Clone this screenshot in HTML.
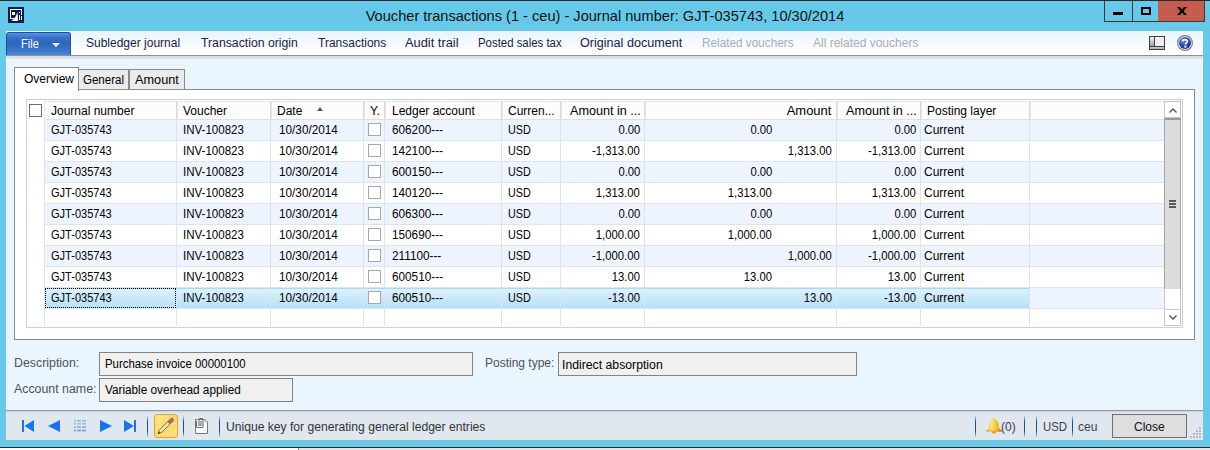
<!DOCTYPE html>
<html><head><meta charset="utf-8">
<style>
*{margin:0;padding:0;box-sizing:border-box}
html,body{width:1210px;height:450px;overflow:hidden;background:#fff;font-family:"Liberation Sans",sans-serif;font-size:12px;color:#000}
.a{position:absolute}
.t{position:absolute;white-space:nowrap;line-height:14px}
.n{font-size:11px}
.sl{transform-origin:0 0}
.sr{transform-origin:100% 0;transform:scaleX(0.94)}
svg{position:absolute;overflow:visible}
#frame{left:0;top:0;width:1210px;height:448px;background:#66c9e9;border-top:1px solid #2b2b2b;border-bottom:1px solid #2b2b2b}
#title{left:0;top:8px;width:1210px;text-align:center;font-size:14.6px;color:#111;line-height:17px;padding-left:0px}
.wb{position:absolute;top:1px;height:21px;border:1px solid #3a3a3a;border-top:none;background:#66c9e9}
#menubar{left:6px;top:31px;width:1197px;height:25px;background:linear-gradient(#eaf4fd,#ffffff);border-bottom:1px solid #8c9196}
.mi{top:36px;color:#1b1b48}
.dis{color:#a9adb3}
#content{left:6px;top:56px;width:1197px;height:354px;background:#ebf5fe}
.tab{position:absolute;background:#ebebeb;border:1px solid #8a8a8a;border-bottom:none}
.hc{position:absolute;top:101px;height:19px;background:#fcfcfc;border:1px solid #e6e6e6;border-bottom-color:#e0e0e0}
.vl{position:absolute;width:1px;background:#d9e5f5}
.cb{position:absolute;width:13px;height:13px;border:1px solid #a8a8a8;background:#fff}
.lab{color:#4f5060}
.fld{position:absolute;background:#f0f0f0;border:1px solid #828282}
.sep{position:absolute;top:415px;width:1px;height:23px;background:linear-gradient(rgba(31,79,134,0),#1f4f86 30%,#1f4f86 70%,rgba(31,79,134,0))}
.st{color:#3b3b55}
</style></head><body>
<div id="frame" class="a"></div>
<svg style="left:8px;top:7px" width="16" height="16" viewBox="0 0 16 16">
<rect width="16" height="16" fill="#0b1b4b"/>
<path d="M2 2h12v1H3v8h3v1H2z" fill="#fff"/>
<rect x="4" y="5" width="3" height="3" fill="#fff"/>
<path d="M3 14 C7 12 8 9 9.5 5 L10 14z" fill="#fff"/>
<rect x="11" y="5" width="1" height="1" fill="#fff"/>
<rect x="11" y="8" width="1" height="5" fill="#fff"/>
<rect x="13" y="3" width="1" height="5" fill="#fff"/>
<rect x="13" y="9" width="1" height="4" fill="#fff"/>
</svg>
<div id="title" class="t">Voucher transactions (1 - ceu) - Journal number: GJT-035743, 10/30/2014</div>
<div class="wb" style="left:1104px;width:29px"></div>
<div class="wb" style="left:1133px;width:26px;border-left:none;border-right:none"></div>
<div class="wb" style="left:1158px;width:47px;background:#c65b50;border-left:none"></div>
<div class="a" style="left:1113px;top:12px;width:10px;height:3px;background:#000"></div>
<div class="a" style="left:1141px;top:7px;width:10px;height:8px;border:2px solid #000;border-top-width:2px"></div>
<svg style="left:1177px;top:7px" width="10" height="8" viewBox="0 0 10 8"><path d="M0 0h3l2 2.5l2-2.5h3l-3.4 4l3.4 4h-3l-2-2.5l-2 2.5h-3l3.4-4z" fill="#000"/></svg>
<div id="content" class="a"></div>
<div class="a" style="left:6px;top:56px;width:1197px;height:3px;background:linear-gradient(#d9dbde,#e3e6ea)"></div>
<div id="menubar" class="a"></div>
<div class="a" style="left:6px;top:32px;width:65px;height:23px;background:linear-gradient(#5a92dc 0%,#3a73c9 20%,#2d64bb 45%,#3a78cc 80%,#4a88d6 100%);border:1px solid #1f4fa5;border-bottom:none;border-radius:3px 3px 0 0"></div>
<div class="t mi sl" style="left:21px;top:37px;color:#fff;transform:scaleX(0.92)">File</div>
<div class="a" style="left:52px;top:43px;width:0;height:0;border-left:4px solid transparent;border-right:4px solid transparent;border-top:4px solid #fff"></div>
<div class="t mi sl" style="left:86px;transform:scaleX(1)">Subledger journal</div>
<div class="t mi sl" style="left:201px;transform:scaleX(1.02)">Transaction origin</div>
<div class="t mi sl" style="left:318px;transform:scaleX(1)">Transactions</div>
<div class="t mi sl" style="left:405px;transform:scaleX(1.07)">Audit trail</div>
<div class="t mi sl" style="left:478px;transform:scaleX(0.95)">Posted sales tax</div>
<div class="t mi sl" style="left:580px;transform:scaleX(1.05)">Original document</div>
<div class="t mi sl dis" style="left:702px;transform:scaleX(0.98)">Related vouchers</div>
<div class="t mi sl dis" style="left:813px;transform:scaleX(1)">All related vouchers</div>
<svg style="left:1149px;top:36px" width="17" height="14" viewBox="0 0 17 14">
<defs><linearGradient id="lg1" x1="0" y1="0" x2="0" y2="1"><stop offset="0" stop-color="#f4f4f4"/><stop offset="1" stop-color="#9da3a9"/></linearGradient>
<linearGradient id="lg2" x1="0" y1="0" x2="0" y2="1"><stop offset="0" stop-color="#c8ccd0"/><stop offset="1" stop-color="#a9aeb3"/></linearGradient></defs>
<rect x="0.5" y="0.5" width="15" height="13" fill="#f0f0f0" stroke="#3b4148"/>
<rect x="1" y="1" width="4" height="9" fill="url(#lg1)"/>
<rect x="5" y="1" width="1" height="9" fill="#3b4148"/>
<rect x="1" y="10" width="14" height="1" fill="#3b4148"/>
<rect x="1" y="11" width="14" height="2" fill="url(#lg2)"/>
</svg>
<svg style="left:1177px;top:35px" width="16" height="16" viewBox="0 0 16 16">
<defs><radialGradient id="hg" cx="0.35" cy="0.3" r="0.8"><stop offset="0" stop-color="#6b9cf0"/><stop offset="0.5" stop-color="#2447b5"/><stop offset="1" stop-color="#1a3aa0"/></radialGradient></defs>
<circle cx="8" cy="8" r="7.4" fill="#f4f4f4" stroke="#808080" stroke-width="1.2"/>
<circle cx="8" cy="8" r="6" fill="url(#hg)"/>
<path d="M5.6 6.2 C5.6 4.3 10.4 4.1 10.4 6.3 C10.4 7.9 8.4 7.8 8.4 9.6" fill="none" stroke="#fff" stroke-width="1.8"/>
<rect x="7.4" y="10.6" width="2" height="2" fill="#fff"/>
</svg>
<div class="a" style="left:14px;top:89px;width:1181px;height:251px;background:#fff;border:1px solid #8a8a8a"></div>
<div class="tab" style="left:78px;top:69px;width:51px;height:20px"></div>
<div class="tab" style="left:129px;top:69px;width:56px;height:20px"></div>
<div class="tab" style="left:14px;top:67px;width:65px;height:24px;background:#fff"></div>
<div class="t" style="left:24px;top:72px">Overview</div>
<div class="t sl" style="left:83px;top:73px;transform:scaleX(0.96)">General</div>
<div class="t sl" style="left:135px;top:73px;transform:scaleX(1.06)">Amount</div>
<div class="a" style="left:26px;top:99px;width:1157px;height:229px;border:1px solid #c3d3e6;background:#fff"></div>
<div class="a" style="left:45px;top:120px;width:1119px;height:21px;background:#eef4fe;border-bottom:1px solid #d9e5f5"></div>
<div class="a" style="left:45px;top:141px;width:1119px;height:21px;background:#ffffff;border-bottom:1px solid #d9e5f5"></div>
<div class="a" style="left:45px;top:162px;width:1119px;height:21px;background:#eef4fe;border-bottom:1px solid #d9e5f5"></div>
<div class="a" style="left:45px;top:183px;width:1119px;height:21px;background:#ffffff;border-bottom:1px solid #d9e5f5"></div>
<div class="a" style="left:45px;top:204px;width:1119px;height:21px;background:#eef4fe;border-bottom:1px solid #d9e5f5"></div>
<div class="a" style="left:45px;top:225px;width:1119px;height:21px;background:#ffffff;border-bottom:1px solid #d9e5f5"></div>
<div class="a" style="left:45px;top:246px;width:1119px;height:21px;background:#eef4fe;border-bottom:1px solid #d9e5f5"></div>
<div class="a" style="left:45px;top:267px;width:1119px;height:21px;background:#ffffff;border-bottom:1px solid #d9e5f5"></div>
<div class="a" style="left:45px;top:288px;width:1119px;height:21px;background:#eef4fe;border-bottom:1px solid #d9e5f5"></div>
<div class="a" style="left:45px;top:288px;width:985px;height:20px;background:linear-gradient(#def1fc,#b6e0f7);border-top:1px solid #a6daf7;border-right:1px solid #9ad4f5"></div>
<div class="vl" style="left:44px;top:120px;height:206px"></div>
<div class="vl" style="left:176px;top:120px;height:206px"></div>
<div class="vl" style="left:270px;top:120px;height:206px"></div>
<div class="vl" style="left:363px;top:120px;height:206px"></div>
<div class="vl" style="left:384px;top:120px;height:206px"></div>
<div class="vl" style="left:501px;top:120px;height:206px"></div>
<div class="vl" style="left:560px;top:120px;height:206px"></div>
<div class="vl" style="left:644px;top:120px;height:206px"></div>
<div class="vl" style="left:836px;top:120px;height:206px"></div>
<div class="vl" style="left:920px;top:120px;height:206px"></div>
<div class="vl" style="left:1029px;top:120px;height:206px"></div>
<div class="t sl" style="left:51px;top:123px;transform:scaleX(0.92)">GJT-035743</div>
<div class="t sl" style="left:183px;top:123px;transform:scaleX(0.96)">INV-100823</div>
<div class="t sl" style="left:279px;top:123px;transform:scaleX(0.98)">10/30/2014</div>
<div class="cb" style="left:368px;top:123px"></div>
<div class="t sl" style="left:392px;top:123px;transform:scaleX(0.98)">606200---</div>
<div class="t sl" style="left:508px;top:123px;transform:scaleX(0.9)">USD</div>
<div class="t sr" style="right:570px;top:123px">0.00</div>
<div class="t sr" style="right:438px;top:123px">0.00</div>
<div class="t sr" style="right:294px;top:123px">0.00</div>
<div class="t" style="left:924px;top:123px">Current</div>
<div class="t sl" style="left:51px;top:144px;transform:scaleX(0.92)">GJT-035743</div>
<div class="t sl" style="left:183px;top:144px;transform:scaleX(0.96)">INV-100823</div>
<div class="t sl" style="left:279px;top:144px;transform:scaleX(0.98)">10/30/2014</div>
<div class="cb" style="left:368px;top:144px"></div>
<div class="t sl" style="left:392px;top:144px;transform:scaleX(0.98)">142100---</div>
<div class="t sl" style="left:508px;top:144px;transform:scaleX(0.9)">USD</div>
<div class="t sr" style="right:570px;top:144px">-1,313.00</div>
<div class="t sr" style="right:378px;top:144px">1,313.00</div>
<div class="t sr" style="right:294px;top:144px">-1,313.00</div>
<div class="t" style="left:924px;top:144px">Current</div>
<div class="t sl" style="left:51px;top:165px;transform:scaleX(0.92)">GJT-035743</div>
<div class="t sl" style="left:183px;top:165px;transform:scaleX(0.96)">INV-100823</div>
<div class="t sl" style="left:279px;top:165px;transform:scaleX(0.98)">10/30/2014</div>
<div class="cb" style="left:368px;top:165px"></div>
<div class="t sl" style="left:392px;top:165px;transform:scaleX(0.98)">600150---</div>
<div class="t sl" style="left:508px;top:165px;transform:scaleX(0.9)">USD</div>
<div class="t sr" style="right:570px;top:165px">0.00</div>
<div class="t sr" style="right:438px;top:165px">0.00</div>
<div class="t sr" style="right:294px;top:165px">0.00</div>
<div class="t" style="left:924px;top:165px">Current</div>
<div class="t sl" style="left:51px;top:186px;transform:scaleX(0.92)">GJT-035743</div>
<div class="t sl" style="left:183px;top:186px;transform:scaleX(0.96)">INV-100823</div>
<div class="t sl" style="left:279px;top:186px;transform:scaleX(0.98)">10/30/2014</div>
<div class="cb" style="left:368px;top:186px"></div>
<div class="t sl" style="left:392px;top:186px;transform:scaleX(0.98)">140120---</div>
<div class="t sl" style="left:508px;top:186px;transform:scaleX(0.9)">USD</div>
<div class="t sr" style="right:570px;top:186px">1,313.00</div>
<div class="t sr" style="right:438px;top:186px">1,313.00</div>
<div class="t sr" style="right:294px;top:186px">1,313.00</div>
<div class="t" style="left:924px;top:186px">Current</div>
<div class="t sl" style="left:51px;top:207px;transform:scaleX(0.92)">GJT-035743</div>
<div class="t sl" style="left:183px;top:207px;transform:scaleX(0.96)">INV-100823</div>
<div class="t sl" style="left:279px;top:207px;transform:scaleX(0.98)">10/30/2014</div>
<div class="cb" style="left:368px;top:207px"></div>
<div class="t sl" style="left:392px;top:207px;transform:scaleX(0.98)">606300---</div>
<div class="t sl" style="left:508px;top:207px;transform:scaleX(0.9)">USD</div>
<div class="t sr" style="right:570px;top:207px">0.00</div>
<div class="t sr" style="right:438px;top:207px">0.00</div>
<div class="t sr" style="right:294px;top:207px">0.00</div>
<div class="t" style="left:924px;top:207px">Current</div>
<div class="t sl" style="left:51px;top:228px;transform:scaleX(0.92)">GJT-035743</div>
<div class="t sl" style="left:183px;top:228px;transform:scaleX(0.96)">INV-100823</div>
<div class="t sl" style="left:279px;top:228px;transform:scaleX(0.98)">10/30/2014</div>
<div class="cb" style="left:368px;top:228px"></div>
<div class="t sl" style="left:392px;top:228px;transform:scaleX(0.98)">150690---</div>
<div class="t sl" style="left:508px;top:228px;transform:scaleX(0.9)">USD</div>
<div class="t sr" style="right:570px;top:228px">1,000.00</div>
<div class="t sr" style="right:438px;top:228px">1,000.00</div>
<div class="t sr" style="right:294px;top:228px">1,000.00</div>
<div class="t" style="left:924px;top:228px">Current</div>
<div class="t sl" style="left:51px;top:249px;transform:scaleX(0.92)">GJT-035743</div>
<div class="t sl" style="left:183px;top:249px;transform:scaleX(0.96)">INV-100823</div>
<div class="t sl" style="left:279px;top:249px;transform:scaleX(0.98)">10/30/2014</div>
<div class="cb" style="left:368px;top:249px"></div>
<div class="t sl" style="left:392px;top:249px;transform:scaleX(0.98)">211100---</div>
<div class="t sl" style="left:508px;top:249px;transform:scaleX(0.9)">USD</div>
<div class="t sr" style="right:570px;top:249px">-1,000.00</div>
<div class="t sr" style="right:378px;top:249px">1,000.00</div>
<div class="t sr" style="right:294px;top:249px">-1,000.00</div>
<div class="t" style="left:924px;top:249px">Current</div>
<div class="t sl" style="left:51px;top:270px;transform:scaleX(0.92)">GJT-035743</div>
<div class="t sl" style="left:183px;top:270px;transform:scaleX(0.96)">INV-100823</div>
<div class="t sl" style="left:279px;top:270px;transform:scaleX(0.98)">10/30/2014</div>
<div class="cb" style="left:368px;top:270px"></div>
<div class="t sl" style="left:392px;top:270px;transform:scaleX(0.98)">600510---</div>
<div class="t sl" style="left:508px;top:270px;transform:scaleX(0.9)">USD</div>
<div class="t sr" style="right:570px;top:270px">13.00</div>
<div class="t sr" style="right:438px;top:270px">13.00</div>
<div class="t sr" style="right:294px;top:270px">13.00</div>
<div class="t" style="left:924px;top:270px">Current</div>
<div class="t sl" style="left:51px;top:291px;transform:scaleX(0.92)">GJT-035743</div>
<div class="t sl" style="left:183px;top:291px;transform:scaleX(0.96)">INV-100823</div>
<div class="t sl" style="left:279px;top:291px;transform:scaleX(0.98)">10/30/2014</div>
<div class="cb" style="left:368px;top:291px"></div>
<div class="t sl" style="left:392px;top:291px;transform:scaleX(0.98)">600510---</div>
<div class="t sl" style="left:508px;top:291px;transform:scaleX(0.9)">USD</div>
<div class="t sr" style="right:570px;top:291px">-13.00</div>
<div class="t sr" style="right:378px;top:291px">13.00</div>
<div class="t sr" style="right:294px;top:291px">-13.00</div>
<div class="t" style="left:924px;top:291px">Current</div>
<div class="hc" style="left:44px;width:133px;border-right-color:#d9d9d9"></div>
<div class="hc" style="left:177px;width:94px;border-right-color:#d9d9d9"></div>
<div class="hc" style="left:271px;width:93px;border-right-color:#d9d9d9"></div>
<div class="hc" style="left:364px;width:21px;border-right-color:#d9d9d9"></div>
<div class="hc" style="left:385px;width:117px;border-right-color:#d9d9d9"></div>
<div class="hc" style="left:502px;width:59px;border-right-color:#d9d9d9"></div>
<div class="hc" style="left:561px;width:84px;border-right-color:#d9d9d9"></div>
<div class="hc" style="left:645px;width:192px;border-right-color:#d9d9d9"></div>
<div class="hc" style="left:837px;width:84px;border-right-color:#d9d9d9"></div>
<div class="hc" style="left:921px;width:109px;border-right-color:#d9d9d9"></div>
<div class="hc" style="left:1030px;width:135px;border-right:none"></div>
<div class="cb" style="left:29px;top:104px;border-color:#6e6e6e"></div>
<div class="t" style="left:51px;top:104px">Journal number</div>
<div class="t" style="left:183px;top:104px">Voucher</div>
<div class="t" style="left:277px;top:104px">Date</div>
<div class="a" style="left:317px;top:107px;width:0;height:0;border-left:3.5px solid transparent;border-right:3.5px solid transparent;border-bottom:4px solid #555"></div>
<div class="t" style="left:370px;top:104px">Y.</div>
<div class="t" style="left:392px;top:104px">Ledger account</div>
<div class="t" style="left:508px;top:104px">Curren...</div>
<div class="t sl" style="left:570px;top:104px;transform:scaleX(1.05)">Amount in ...</div>
<div class="t" style="right:379px;top:104px;transform:scaleX(1.08);transform-origin:100% 0">Amount</div>
<div class="t sl" style="left:846px;top:104px;transform:scaleX(1.05)">Amount in ...</div>
<div class="t" style="left:927px;top:104px">Posting layer</div>
<div class="a" style="left:45px;top:288px;width:131px;height:20px;border:1px dotted #000"></div>
<div class="a" style="left:1164px;top:101px;width:17px;height:17px;background:#fff;border:1px solid #c6c6c6"></div>
<svg style="left:1169px;top:108px" width="8" height="5" viewBox="0 0 8 5"><path d="M0.5 4.5L4 1L7.5 4.5" fill="none" stroke="#505050" stroke-width="1.3"/></svg>
<div class="a" style="left:1164px;top:118px;width:17px;height:172px;background:#dcdcdc;border:1px solid #a6a6a6;border-top:2px solid #9a9a9a"></div>
<div class="a" style="left:1169px;top:200px;width:7px;height:2px;background:#5a5a5a;box-shadow:0 3px 0 #5a5a5a,0 6px 0 #5a5a5a"></div>
<div class="a" style="left:1164px;top:289px;width:17px;height:21px;background:#fff;border:1px solid #c6c6c6;border-top:none"></div>
<div class="a" style="left:1164px;top:309px;width:17px;height:17px;background:#fff;border:1px solid #c6c6c6"></div>
<svg style="left:1169px;top:315px" width="8" height="5" viewBox="0 0 8 5"><path d="M0.5 0.5L4 4L7.5 0.5" fill="none" stroke="#505050" stroke-width="1.3"/></svg>
<div class="t lab sl" style="left:13.5px;top:356px;transform:scaleX(1.03)">Description:</div>
<div class="fld" style="left:99px;top:352px;width:374px;height:24px"></div>
<div class="t sl" style="left:105px;top:357px;transform:scaleX(0.95)">Purchase invoice 00000100</div>
<div class="t lab sl" style="left:14px;top:382px;transform:scaleX(1.03)">Account name:</div>
<div class="fld" style="left:99px;top:378px;width:194px;height:24px"></div>
<div class="t sl" style="left:105px;top:383px;transform:scaleX(0.98)">Variable overhead applied</div>
<div class="t lab" style="left:485px;top:356px">Posting type:</div>
<div class="fld" style="left:558px;top:352px;width:299px;height:24px"></div>
<div class="t sl" style="left:561.5px;top:358px;transform:scaleX(1.02)">Indirect absorption</div>
<div class="a" style="left:6px;top:410px;width:1197px;height:30px;background:#e1e7ef;border-top:1px solid #8e97a3"></div>
<div class="a" style="left:6px;top:411px;width:1197px;height:2px;background:linear-gradient(#c9d0d9,#e1e7ef)"></div>
<div class="a" style="left:6px;top:440px;width:1197px;height:1px;background:#8fb7cf"></div>
<svg style="left:22px;top:420px" width="115" height="12" viewBox="0 0 115 12">
<rect x="0" y="0" width="2" height="12" fill="#1a73ee"/><path d="M2.5 6L12 0v12z" fill="#1a73ee"/>
<path d="M26 6L38 0v12z" fill="#1a73ee"/>
<path d="M78 0L90 6L78 12z" fill="#1a73ee"/>
<path d="M102 0L112 6L102 12z" fill="#1a73ee"/><rect x="112" y="0" width="2" height="12" fill="#1a73ee"/>
</svg>
<svg style="left:74px;top:420px" width="12" height="12" viewBox="0 0 12 12"><rect x="0" y="0" width="2" height="1.6" fill="#8fb6f2"/><rect x="3" y="0" width="4" height="1.6" fill="#8fb6f2"/><rect x="8" y="0" width="4" height="1.6" fill="#8fb6f2"/><rect x="0" y="3" width="2" height="1.6" fill="#9cc0ee"/><rect x="3" y="3" width="4" height="1.6" fill="#9cc0ee"/><rect x="8" y="3" width="4" height="1.6" fill="#9cc0ee"/><rect x="0" y="6.3" width="2" height="1.6" fill="#8aaee0"/><rect x="3" y="6.3" width="4" height="1.6" fill="#8aaee0"/><rect x="8" y="6.3" width="4" height="1.6" fill="#8aaee0"/><rect x="0" y="9.7" width="2" height="1.6" fill="#6a98dc"/><rect x="3" y="9.7" width="4" height="1.6" fill="#6a98dc"/><rect x="8" y="9.7" width="4" height="1.6" fill="#6a98dc"/></svg>
<div class="sep" style="left:147px"></div>
<div class="sep" style="left:183px"></div>
<div class="sep" style="left:219px"></div>
<div class="sep" style="left:975px"></div>
<div class="sep" style="left:1024px"></div>
<div class="sep" style="left:1036px"></div>
<div class="sep" style="left:1072px"></div>
<div class="a" style="left:154px;top:414px;width:24px;height:24px;background:linear-gradient(135deg,#ffe58a,#ffd870 50%,#ffe27a);border:1px solid #e0a335;border-radius:3px"></div>
<svg style="left:152px;top:412px" width="28" height="28" viewBox="0 0 28 28">
<path d="M6.2 21.6 L7.3 18 L15.8 9.6 L18.2 12 L9.7 20.4z" fill="#f8e4a0" stroke="#5a5030" stroke-width="0.8"/>
<path d="M6.2 21.6 L6.8 19.6 L8.2 21z" fill="#222"/>
<path d="M15.8 9.6 L18.2 12 L19.2 11 L16.8 8.6z" fill="#3f9a5a"/>
<path d="M16.8 8.6 L19.2 11 L21.2 9 Q22 7.6 20.9 6.6 Q19.9 5.6 18.6 6.8z" fill="#d96060" stroke="#7a4040" stroke-width="0.6"/>
</svg>
<svg style="left:195px;top:418px" width="14" height="16" viewBox="0 0 14 16">
<path d="M0.5 1.5 H10 L12.5 4 V15.5 H0.5z" fill="#fbfbfb" stroke="#7a7a7a"/>
<path d="M10 1.5 V4 H12.5" fill="#d8d8d8" stroke="#a0a0a0" stroke-width="0.7"/>
<path d="M1.5 3 V8.6 Q1.5 9.5 2.5 9.5 H7 Q8 9.5 8 8.6 V2 Q8 0.5 6.6 0.5 H5.4 Q4 0.5 4 2 V7.2 H6 V3" fill="none" stroke="#6a6a6a" stroke-width="1.1"/>
</svg>
<div class="t st sl" style="left:226px;top:420px;color:#333;transform:scaleX(1.01)">Unique key for generating general ledger entries</div>
<svg style="left:986px;top:418px" width="16" height="16" viewBox="0 0 16 16">
<defs><linearGradient id="bg1" x1="0" y1="0" x2="1" y2="0"><stop offset="0" stop-color="#f0b820"/><stop offset="0.35" stop-color="#ffe27a"/><stop offset="0.7" stop-color="#f2bc2a"/><stop offset="1" stop-color="#c98208"/></linearGradient>
<linearGradient id="bg2" x1="0" y1="0" x2="1" y2="0"><stop offset="0" stop-color="#e8a818"/><stop offset="0.5" stop-color="#f5c030"/><stop offset="1" stop-color="#b86a10"/></linearGradient></defs>
<path d="M8 0.3 C8.9 0.3 9.2 0.9 9.2 1.4 C11.8 2 12.5 4.5 12.7 7.5 C12.9 10 13.4 11.2 15.6 12.2 L15.6 13.4 H0.4 V12.2 C2.6 11.2 3.1 10 3.3 7.5 C3.5 4.5 4.2 2 6.8 1.4 C6.8 0.9 7.1 0.3 8 0.3z" fill="url(#bg1)"/>
<rect x="0.4" y="12.2" width="15.2" height="1.3" fill="url(#bg2)"/>
<ellipse cx="8" cy="14.4" rx="1.8" ry="1.3" fill="#e0a020"/>
</svg>
<div class="t st" style="left:1001px;top:420px">(0)</div>
<div class="t st sl" style="left:1042.5px;top:420px;transform:scaleX(0.95)">USD</div>
<div class="t st" style="left:1078px;top:420px">ceu</div>
<div class="a" style="left:1112px;top:414px;width:75px;height:24px;border:1px solid #707070;background:#dedede"></div>
<div class="t" style="left:1134px;top:420px;color:#111">Close</div>
<div class="a" style="left:1199px;top:427px;width:2px;height:2px;background:#b3b9c2"></div>
<div class="a" style="left:1196px;top:430px;width:2px;height:2px;background:#b3b9c2"></div>
<div class="a" style="left:1199px;top:430px;width:2px;height:2px;background:#b3b9c2"></div>
<div class="a" style="left:1193px;top:433px;width:2px;height:2px;background:#b3b9c2"></div>
<div class="a" style="left:1196px;top:433px;width:2px;height:2px;background:#b3b9c2"></div>
<div class="a" style="left:1199px;top:433px;width:2px;height:2px;background:#b3b9c2"></div>
<div class="a" style="left:1190px;top:436px;width:2px;height:2px;background:#b3b9c2"></div>
<div class="a" style="left:1193px;top:436px;width:2px;height:2px;background:#b3b9c2"></div>
<div class="a" style="left:1196px;top:436px;width:2px;height:2px;background:#b3b9c2"></div>
<div class="a" style="left:1199px;top:436px;width:2px;height:2px;background:#b3b9c2"></div>
<div class="a" style="left:298px;top:448px;width:912px;height:2px;background:#e6e6e6;border-left:1px solid #8a8a8a"></div>
</body></html>
